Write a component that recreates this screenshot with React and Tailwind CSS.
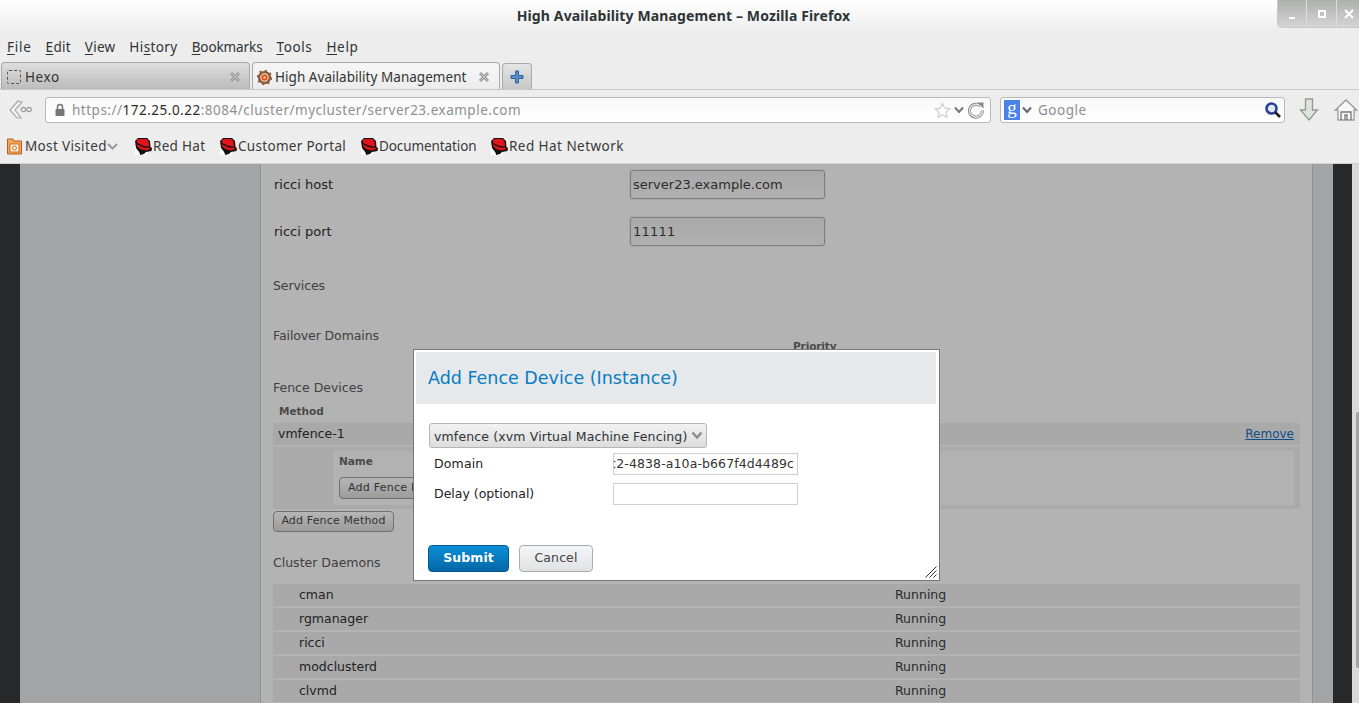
const chrome = { fontFamily: '"Noto Sans", "Open Sans", sans-serif' };
const page = { fontFamily: '"DejaVu Sans", sans-serif' };

function RedHat() {
  return (
    <svg width="17" height="17" viewBox="0 0 17 17" className="shrink-0">
      <path d="M0 8 H12 V17 H0 Z" fill="#fff" />
      <path d="M0 3 L3 0 H12 L15 3 L15.5 9 L17 10 L16.5 13 L11 14 L9 16 L5 17 L4 14 L1 10 Z" fill="#111" />
      <path d="M3 1 H11.5 L13.5 3.5 L14 8.5 L9 8 L3 5.5 L1.5 3.5 Z" fill="#e0141b" />
      <path d="M1.5 6 L3.5 7 L9 9.5 L14 9.5 L15.5 11 L11 12.5 L6 11.5 L2.5 9 Z" fill="#d3141a" />
      <path d="M0 11 L4 14 L5 17 H0 Z" fill="#fff" />
    </svg>
  );
}

function Mark({ children, first, className }) {
  return (
    <span className={"whitespace-nowrap " + (className || "")}>
      <span className="underline underline-offset-2">{first}</span>
      {children}
    </span>
  );
}

function TabX({ className }) {
  return (
    <svg width="12" height="12" viewBox="0 0 12 12" className={className}>
      <path d="M2 2 L10 10 M10 2 L2 10" stroke="#9a9a9a" strokeWidth="3" />
      <path d="M2.5 2.5 L9.5 9.5 M9.5 2.5 L2.5 9.5" stroke="#c4c4c4" strokeWidth="1" />
    </svg>
  );
}

function Bookmark({ label, w, gap, track }) {
  return (
    <div className="flex items-center shrink-0" style={{ marginRight: gap }}>
      <RedHat />
      <span className={"ml-[1px] text-[13.5px] text-[#3a3a3a] whitespace-nowrap " + track} style={{ width: w }}>{label}</span>
    </div>
  );
}

function Daemon({ name }) {
  return (
    <div className="flex items-center h-[22px] bg-[#a9a9a9] mb-[2px] text-[12.5px] text-[#222]">
      <span className="ml-[26px] w-[596px]">{name}</span>
      <span className="text-[#2a2a2a]">Running</span>
    </div>
  );
}

export default function App() {
  return (
    <div className="relative w-[1359px] h-[703px] overflow-hidden bg-[#ededed]" style={chrome}>
      {/* title bar */}
      <div className="relative flex items-center justify-center h-[32px] pb-[1px] bg-gradient-to-b from-white to-[#ededed]">
        <span className="ml-[8px] text-[14px] font-bold text-[#2e3436] tracking-[0.13px]">High Availability Management – Mozilla Firefox</span>
        <div className="absolute right-0 top-0 flex h-[28px] w-[82px] rounded-bl-[5px] bg-gradient-to-b from-[#aeb0ae] to-[#d4d4d4] border-l border-b border-[#c8c8c8]">
          <div className="flex items-center justify-center w-[29px] border-r border-[#dcdcdc] pt-[8px]"><div className="w-[6px] h-[2px] bg-white" /></div>
          <div className="flex items-center justify-center w-[30px] border-r border-[#dcdcdc]"><div className="w-[8px] h-[8px] border-2 border-white" /></div>
          <div className="flex items-center justify-center flex-1 pl-[2px]">
            <svg width="10" height="10" viewBox="0 0 10 10"><path d="M1 1 L9 9 M9 1 L1 9" stroke="#fff" strokeWidth="2.2" /></svg>
          </div>
        </div>
      </div>
      {/* menu */}
      <div className="flex items-center h-[30px] pl-[7px] gap-[14px] text-[13.5px] text-[#2e3436] tracking-[0.25px]">
        <Mark first="F" className="tracking-[0.75px]">ile</Mark>
        <Mark first="E">dit</Mark>
        <Mark first="V">iew</Mark>
        <span className="tracking-[0.4px]">Hi<span className="underline underline-offset-2">s</span>tory</span>
        <Mark first="B" className="tracking-[-0.1px]">ookmarks</Mark>
        <Mark first="T" className="tracking-[0.6px]">ools</Mark>
        <Mark first="H" className="tracking-[0.7px]">elp</Mark>
      </div>
      {/* tabs */}
      <div className="flex items-end h-[28px] pl-[1px] border-b border-[#c9c9c9]">
        <div className="flex items-center h-[27px] w-[249px] pt-[2px] rounded-t-[4px] border border-b-0 border-[#a9a9a9] bg-gradient-to-b from-[#dedede] to-[#bcbcbc] pl-[5px]">
          <div className="w-[14px] h-[14px] rounded-[2px] border border-dashed border-[#555]" />
          <span className="ml-[4px] text-[13.5px] text-[#333] tracking-[0.6px]">Hexo</span>
          <TabX className="ml-auto mr-[8px]" />
        </div>
        <div className="flex items-center h-[27px] w-[248px] pt-[2px] ml-[2px] rounded-t-[4px] border border-b-0 border-[#a9a9a9] bg-gradient-to-b from-[#f6f6f6] to-[#ececec] pl-[4px]">
          <svg width="15" height="15" viewBox="0 0 15 15" className="shrink-0">
            <circle cx="7.5" cy="7.5" r="5.4" fill="none" stroke="#8a5a32" strokeWidth="2.4" />
            <circle cx="7.5" cy="7.5" r="7" fill="none" stroke="#8a5a32" strokeWidth="1.6" strokeDasharray="2.2 3.3" />
            <circle cx="7.5" cy="7.5" r="3.2" fill="#e0561a" />
            <circle cx="7.5" cy="7.5" r="1.2" fill="#f4c9a0" />
          </svg>
          <span className="ml-[3px] text-[13.5px] text-[#333] tracking-[0.04px] whitespace-nowrap">High Availability Management</span>
          <TabX className="ml-auto mr-[9px]" />
        </div>
        <div className="flex items-center justify-center h-[26px] w-[30px] ml-[2px] rounded-t-[4px] border border-b-0 border-[#a9a9a9] bg-gradient-to-b from-[#e4e4e4] to-[#c8c8c8]">
          <svg width="14" height="14" viewBox="0 0 14 14">
            <path d="M5.5 1h3v4.5H13v3H8.5V13h-3V8.5H1v-3h4.5z" fill="#5b8ec8" stroke="#2f5f9e" strokeWidth="1" />
          </svg>
        </div>
      </div>
      {/* nav */}
      <div className="flex items-center h-[40px] text-[13.5px]">
        <div className="flex items-center w-[45px] pl-[8px] shrink-0">
          <svg width="24" height="22" viewBox="0 0 24 22">
            <path d="M10 2 L2 11 L9 19 L13 19 L7 11 L14 3 Z" fill="#f4f4f4" stroke="#a9a9a9" strokeWidth="1.2" />
            <circle cx="15.5" cy="10.5" r="2.2" fill="none" stroke="#9b9b9b" strokeWidth="1.2" />
            <circle cx="21" cy="10.5" r="2.2" fill="none" stroke="#9b9b9b" strokeWidth="1.2" />
          </svg>
        </div>
        <div className="flex items-center w-[946px] h-[26px] rounded-[3px] border border-[#b9b9b9] bg-gradient-to-b from-[#f8f8f8] to-white pl-[8px] pr-[5px]">
          <svg width="12" height="14" viewBox="0 0 12 14" className="shrink-0">
            <rect x="1.5" y="6" width="9" height="7" rx="1" fill="#777" />
            <path d="M3.5 6.5V4a2.5 2.5 0 0 1 5 0v2.5" fill="none" stroke="#777" strokeWidth="1.5" />
          </svg>
          <span className="ml-[6px] text-[#8f8f8f] tracking-[0.5px] whitespace-nowrap">https://<span className="text-[#2e2e2e]">172.25.0.22</span>:8084/cluster/mycluster/server23.example.com</span>
          <div className="ml-auto flex items-center">
            <svg width="17" height="17" viewBox="0 0 17 17"><path d="M8.5 1.5 L10.6 6.2 L15.7 6.8 L11.9 10.2 L13 15.3 L8.5 12.7 L4 15.3 L5.1 10.2 L1.3 6.8 L6.4 6.2 Z" fill="#fff" stroke="#cfcfcf" strokeWidth="1.2" /></svg>
            <svg width="10" height="8" viewBox="0 0 10 8" className="ml-[3px]"><path d="M1 1.5 L5 6 L9 1.5" fill="none" stroke="#777" strokeWidth="2" /></svg>
            <svg width="18" height="18" viewBox="0 0 18 18" className="ml-[3px]">
              <path d="M13.5 5 A6.5 6.5 0 1 0 15.5 9.5" fill="none" stroke="#8a8a8a" strokeWidth="3" />
              <path d="M13.5 5 A6.5 6.5 0 1 0 15.5 9.5" fill="none" stroke="#f2f2f2" strokeWidth="1.2" />
              <path d="M10 1.5 L16.5 1.5 L16.5 7.5 Z" fill="#8a8a8a" />
            </svg>
          </div>
        </div>
        <div className="flex items-center w-[285px] h-[26px] ml-[9px] rounded-[3px] border border-[#b9b9b9] bg-gradient-to-b from-[#f8f8f8] to-white pl-[3px] pr-[2px]">
          <div className="flex items-center justify-center w-[16px] h-[20px] bg-[#4b82e8] text-white text-[19px] leading-none shrink-0 pb-[5px]" style={{ fontFamily: '"Liberation Serif", serif' }}>g</div>
          <svg width="10" height="8" viewBox="0 0 10 8" className="ml-[2px]"><path d="M1 1.5 L5 6 L9 1.5" fill="none" stroke="#666" strokeWidth="2" /></svg>
          <span className="ml-[6px] text-[#8f8f8f] tracking-[0.5px]">Google</span>
          <svg width="18" height="18" viewBox="0 0 18 18" className="ml-auto">
            <circle cx="7.5" cy="7.5" r="5" fill="#dfe8f5" stroke="#2a3f9a" strokeWidth="2.6" />
            <path d="M11 11 L16 16" stroke="#222" strokeWidth="2.6" />
          </svg>
        </div>
        <svg width="20" height="26" viewBox="0 0 20 26" className="ml-[14px] shrink-0">
          <path d="M6.5 2 H13.5 V13 H18.5 L10 23 L1.5 13 H6.5 Z" fill="#dfe3df" stroke="#8f9a94" strokeWidth="1.3" />
        </svg>
        <svg width="24" height="24" viewBox="0 0 24 24" className="ml-[15px] shrink-0">
          <path d="M1.5 12 L12 2 L22.5 12 L20 12 L20 22 L4 22 L4 12 Z" fill="#f8f8f8" stroke="#9a9a9a" strokeWidth="1.3" />
          <path d="M7 22 V14 H17 V22 M11 22 V17 H13 V22" fill="none" stroke="#777" strokeWidth="1.3" />
        </svg>
      </div>
      {/* bookmarks */}
      <div className="flex items-center h-[34px] pl-[7px] border-b border-[#d4d4d4]">
        <svg width="15" height="17" viewBox="0 0 15 17" className="shrink-0">
          <path d="M0.5 3 L0.5 1 H6 L7 3 H14.5 V16 H0.5 Z" fill="#f2a65a" stroke="#b8601c" />
          <rect x="3" y="6" width="9" height="8" fill="#fff3e0" stroke="#c9702a" />
          <circle cx="7.5" cy="10" r="2" fill="none" stroke="#c9702a" />
        </svg>
        <span className="ml-[3px] text-[13.5px] text-[#3a3a3a] tracking-[0.35px] w-[82px] whitespace-nowrap">Most Visited</span>
        <svg width="11" height="7" viewBox="0 0 11 7" className="shrink-0"><path d="M1 1 L5.5 5.5 L10 1" fill="none" stroke="#9a9a9a" strokeWidth="2" /></svg>
        <div className="w-[17px] shrink-0" />
        <Bookmark label="Red Hat" w={53} gap={14} track="tracking-[0.3px]" />
        <Bookmark label="Customer Portal" w={110} gap={13} track="tracking-[0.3px]" />
        <Bookmark label="Documentation" w={98} gap={14} track="tracking-[-0.1px]" />
        <Bookmark label="Red Hat Network" w={116} gap={0} track="tracking-[0.45px]" />
      </div>
      {/* page */}
      <div className="flex h-[539px] overflow-hidden" style={page}>
        <div className="w-[20px] bg-[#27282a] shrink-0" />
        <div className="w-[240px] bg-[#a3a4a6] border-r border-[#909294] shrink-0 box-content" />
        <div className="w-[1051px] shrink-0 bg-[#b3b3b3] px-[12px] pt-[5px] text-[12.5px]">
          <div className="flex items-center h-[31px] text-[#222]">
            <span className="w-[356px] pl-[1px] text-[13px]">ricci host</span>
            <div className="border border-[#aaaaaa] w-[197px] h-[31px]">
              <div className="flex items-center h-[29px] rounded-[3px] border border-[#7d7d7d] bg-gradient-to-b from-[#a9a9a9] to-[#b0b0b0] pl-[2px] text-[13px] text-[#2d2d2d]">server23.example.com</div>
            </div>
          </div>
          <div className="flex items-center h-[31px] mt-[16px] text-[#222]">
            <span className="w-[356px] pl-[1px] text-[13px]">ricci port</span>
            <div className="border border-[#aaaaaa] w-[197px] h-[31px]">
              <div className="flex items-center h-[29px] rounded-[3px] border border-[#7d7d7d] bg-gradient-to-b from-[#a9a9a9] to-[#b0b0b0] pl-[2px] text-[13px] text-[#2d2d2d] tracking-[0.2px]">11111</div>
            </div>
          </div>
          <div className="flex items-center h-[20px] mt-[29px] text-[#404040] tracking-[-0.1px]">Services</div>
          <div className="flex items-start h-[20px] mt-[30px] text-[#404040] tracking-[-0.1px]">
            <span className="w-[520px] leading-[20px]">Failover Domains</span>
            <span className="mt-[13px] text-[10.5px] leading-[14px] font-bold text-[#4a4a4a] whitespace-nowrap">Priority</span>
          </div>
          <div className="flex items-center h-[20px] mt-[32px] text-[#404040]">Fence Devices</div>
          <div className="flex items-center h-[14px] mt-[7px] pl-[6px] text-[10.5px] font-bold text-[#4a4a4a]">Method</div>
          <div className="flex items-center h-[22px] mt-[4px] bg-[#a9a9a9] pl-[5px] pr-[6px] text-[#222]">
            <span>vmfence-1</span>
            <span className="ml-auto text-[12px] text-[#0f4f86] underline">Remove</span>
          </div>
          <div className="h-[62px] mt-[2px] bg-[#aaaaaa] pl-[60px] pr-[6px] py-[4px]">
            <div className="h-[54px] bg-[#b2b2b2] pl-[6px]">
              <div className="flex items-center h-[22px] text-[10.5px] font-bold text-[#4a4a4a]">Name</div>
              <div className="mt-[4px] flex items-center h-[22px] w-[124px] rounded-[4px] border border-[#707070] bg-gradient-to-b from-[#b5b5b5] to-[#9c9c9c] pl-[8px] text-[11px] text-[#333] tracking-[0.25px] whitespace-nowrap">Add Fence Instance</div>
            </div>
          </div>
          <div className="mt-[2px] flex items-center h-[21px] w-[121px] justify-center rounded-[4px] border border-[#707070] bg-gradient-to-b from-[#b5b5b5] to-[#9c9c9c] text-[11px] text-[#333] tracking-[0.15px] whitespace-nowrap">Add Fence Method</div>
          <div className="flex items-center h-[20px] mt-[21px] text-[#404040]">Cluster Daemons</div>
          <div className="mt-[11px]">
            <Daemon name="cman" />
            <Daemon name="rgmanager" />
            <Daemon name="ricci" />
            <Daemon name="modclusterd" />
            <Daemon name="clvmd" />
          </div>
        </div>
        <div className="w-[21px] bg-[#a3a4a6] border-l border-[#909294] shrink-0" />
        <div className="w-[19px] bg-[#27282a] shrink-0" />
        <div className="flex-1 bg-[#d9d9d9] relative">
          <div className="absolute right-0 top-[248px] w-[3px] h-[256px] rounded-l-[2px] bg-[#a3a3a3]" />
        </div>
      </div>
      {/* dialog */}
      <div className="absolute left-[413px] top-[349px] w-[527px] h-[232px] bg-white border border-[#777777]" style={page}>
        <div className="flex items-center h-[52px] mt-[2px] ml-[2px] mr-[3px] bg-[#e6e9ec] pl-[12px] text-[17.5px] text-[#0a7cc1]">Add Fence Device (Instance)</div>
        <div className="flex items-center justify-between mt-[19px] ml-[15px] w-[278px] h-[25px] rounded-[3px] border border-[#b5b5b5] bg-gradient-to-b from-[#f2f2f2] to-[#dcdcdc] pl-[4px] pr-[3px] text-[12.5px] text-[#2e3436] tracking-[0.14px] whitespace-nowrap">
          <span className="mt-[4px]">vmfence (xvm Virtual Machine Fencing)</span>
          <svg width="12" height="9" viewBox="0 0 12 9"><path d="M1.5 1.5 L6 6.5 L10.5 1.5" fill="none" stroke="#8a8a8a" strokeWidth="2.2" /></svg>
        </div>
        <div className="flex items-center h-[22px] mt-[5px] ml-[20px] text-[12.5px] tracking-[0.15px] text-[#222]">
          <span className="w-[179px]">Domain</span>
          <div className="flex items-center justify-end w-[185px] h-[22px] border border-[#ccd0d3] pr-[3px] overflow-hidden text-[#333] tracking-[0.1px] whitespace-nowrap">c2-4838-a10a-b667f4d4489c</div>
        </div>
        <div className="flex items-center h-[22px] mt-[8px] ml-[20px] text-[12.5px] text-[#222]">
          <span className="w-[179px]">Delay (optional)</span>
          <div className="w-[185px] h-[22px] border border-[#ccd0d3]" />
        </div>
        <div className="flex mt-[40px] ml-[14px] gap-[10px] text-[12.5px]">
          <div className="flex items-center justify-center w-[81px] h-[27px] pb-[1px] rounded-[4px] border border-[#045a96] bg-gradient-to-b from-[#0c8fd6] to-[#0567a6] font-bold text-white tracking-[0.1px]">Submit</div>
          <div className="flex items-center justify-center w-[74px] h-[27px] pb-[1px] rounded-[4px] border border-[#a9adb0] bg-gradient-to-b from-[#f4f5f6] to-[#dfe2e4] text-[#444] tracking-[0.1px]">Cancel</div>
        </div>
        <svg width="12" height="12" viewBox="0 0 12 12" className="absolute right-[2px] bottom-[2px]">
          <path d="M0.5 11.5 L11.5 0.5 M4.5 11.5 L11.5 4.5 M8.5 11.5 L11.5 8.5" stroke="#333" strokeWidth="1" />
        </svg>
      </div>
    </div>
  );
}
